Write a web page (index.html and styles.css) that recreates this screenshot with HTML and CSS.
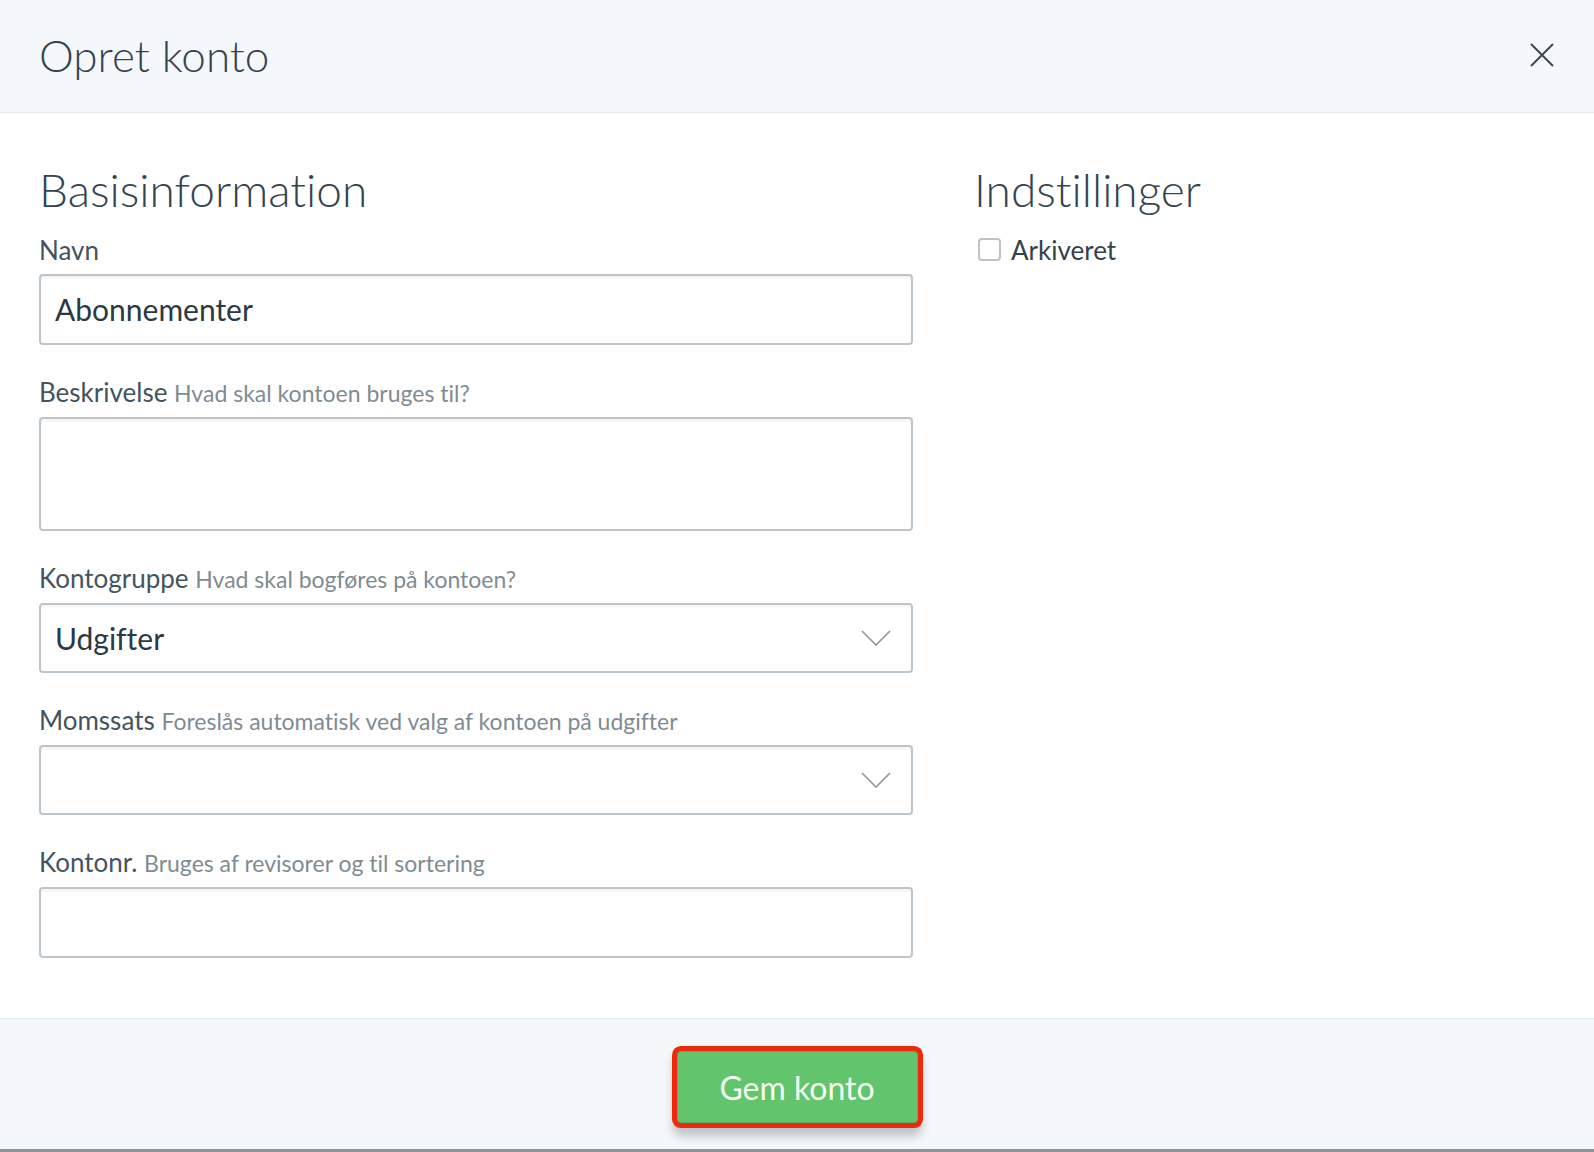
FILE: index.html
```html
<!DOCTYPE html>
<html lang="da">
<head>
    <meta charset="UTF-8">
    <meta name="viewport" content="width=device-width, initial-scale=1.0">
    <title>Opret konto</title>
    <link rel="stylesheet" href="styles.css">
</head>
<body>
    <div class="modal">
        <header class="modal-header">
            <h1>Opret konto</h1>
            <button class="close" aria-label="Luk">
                <svg width="24" height="24" viewBox="0 0 24 24">
                    <path d="M1 1 L23 23 M23 1 L1 23" stroke="#3d4a53" stroke-width="2" fill="none"/>
                </svg>
            </button>
        </header>

        <div class="modal-body">
            <section class="col-main">
                <h2>Basisinformation</h2>

                <div class="field">
                    <label class="field-label">Navn</label>
                    <input class="control" type="text" value="Abonnementer">
                </div>

                <div class="field">
                    <label class="field-label">Beskrivelse <span class="hint">Hvad skal kontoen bruges til?</span></label>
                    <textarea class="control textarea"></textarea>
                </div>

                <div class="field">
                    <label class="field-label">Kontogruppe <span class="hint">Hvad skal bogføres på kontoen?</span></label>
                    <div class="control select">
                        <span>Udgifter</span>
                        <svg class="chevron" width="30" height="16" viewBox="0 0 30 16">
                            <polyline points="1,1 15,15 29,1" stroke="#8a96a0" stroke-width="1.6" fill="none"/>
                        </svg>
                    </div>
                </div>

                <div class="field">
                    <label class="field-label">Momssats <span class="hint">Foreslås automatisk ved valg af kontoen på udgifter</span></label>
                    <div class="control select">
                        <span></span>
                        <svg class="chevron" width="30" height="16" viewBox="0 0 30 16">
                            <polyline points="1,1 15,15 29,1" stroke="#8a96a0" stroke-width="1.6" fill="none"/>
                        </svg>
                    </div>
                </div>

                <div class="field">
                    <label class="field-label">Kontonr. <span class="hint">Bruges af revisorer og til sortering</span></label>
                    <input class="control" type="text" value="">
                </div>
            </section>

            <section class="col-side">
                <h2>Indstillinger</h2>
                <label class="check">
                    <span class="box"></span>
                    Arkiveret
                </label>
            </section>
        </div>

        <footer class="modal-footer">
            <button class="btn-save">Gem konto</button>
        </footer>
    </div>
</body>
</html>
```

FILE: styles.css
```css
* {
    margin: 0;
    padding: 0;
    box-sizing: border-box;
    font-family: Lato, "Open Sans", sans-serif;
    font-variant-ligatures: none;
}

body {
    background: #ffffff;
    color: #33434e;
}

.modal {
    height: 1152px;
    display: flex;
    flex-direction: column;
    border-bottom: 3px solid #8c9499;
}

.modal-header {
    height: 113px;
    background: #f5f8fa;
    border-bottom: 1px solid #e2e7ea;
    display: flex;
    align-items: center;
    justify-content: space-between;
    padding: 0 40px 2px 39px;
}

.modal-header h1 {
    font-size: 44px;
    font-weight: 300;
    line-height: 1.1;
    color: #34444f;
}

.close {
    background: none;
    border: none;
    width: 24px;
    height: 24px;
    cursor: pointer;
}

.modal-body {
    flex: 1;
    display: grid;
    grid-template-columns: 874px 1fr;
    column-gap: 61px;
    padding: 52px 39px 0 39px;
}

h2 {
    font-size: 46px;
    font-weight: 300;
    line-height: 1.1;
    color: #34444f;
    margin-bottom: 19px;
}

.field {
    margin-bottom: 32px;
}

.field-label {
    display: block;
    font-size: 26px;
    line-height: 30px;
    color: #44545f;
    margin-bottom: 9px;
}

.hint {
    font-size: 23px;
    color: #7f8b93;
}

.control {
    display: block;
    width: 100%;
    height: 71px;
    border: 2px solid #bcc5cb;
    border-radius: 4px;
    box-shadow: inset 0 2px 3px rgba(0, 0, 0, 0.06);
    background: #ffffff;
    padding: 0 14px;
    font-size: 30px;
    color: #2a3942;
    outline: none;
}

.textarea {
    height: 114px;
    resize: none;
}

.select {
    display: flex;
    align-items: center;
    justify-content: space-between;
    padding-right: 20px;
    height: 70px;
}

.check {
    display: flex;
    align-items: center;
    gap: 10px;
    font-size: 26px;
    line-height: 30px;
    color: #33434e;
    padding-left: 4px;
}

.box {
    width: 23px;
    height: 23px;
    border: 2px solid #bac3c9;
    border-radius: 4px;
    background: #ffffff;
}

.modal-footer {
    height: 131px;
    background: #f5f8fa;
    border-top: 1px solid #e2e7ea;
    display: flex;
    justify-content: center;
    padding-top: 32px;
}

.btn-save {
    width: 241px;
    height: 72px;
    background: #62c46c;
    border: 1px solid #55b25f;
    border-radius: 4px;
    color: #f4fff2;
    font-size: 32px;
    cursor: pointer;
    box-shadow: 0 0 0 5px #ee2a0c, 0 9px 10px 4px rgba(60, 70, 80, 0.3);
}
```
